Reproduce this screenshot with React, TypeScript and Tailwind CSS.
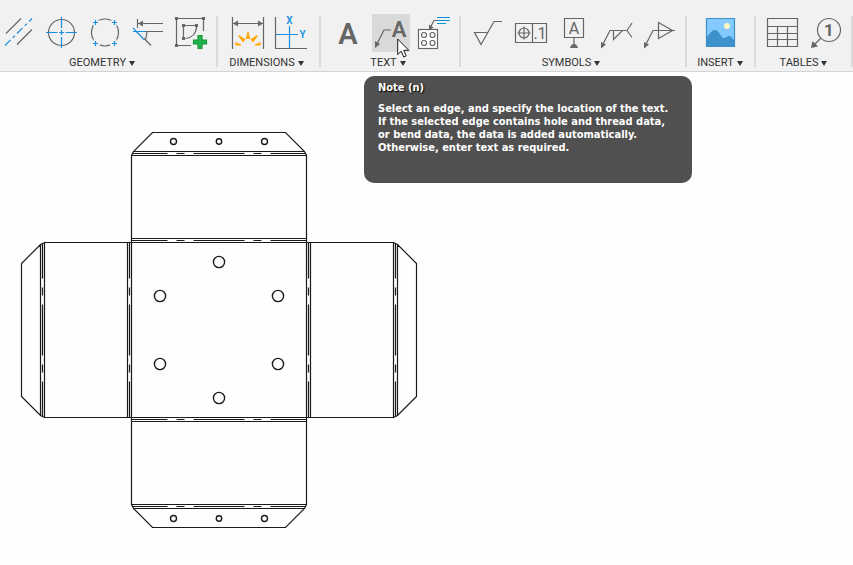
import { ReactNode } from "react";
import clsx from "clsx";

const GRAY = "#666666";
const BLUE = "#1a8fe0";

interface Tool {
  name: string;
  icon: ReactNode;
  tooltip?: { title: string; body: string };
}

interface ToolGroup {
  label: string;
  spacing: string;
  labelSpacing?: string;
  tools: Tool[];
}

const ParallelIcon = () => (
  <>
    <path d="M6 19.5 21 4.5M17 30.5l15-15" />
    <path d="M5 31.5 32 4.5" stroke={BLUE} strokeDasharray="8 3 3 3" />
  </>
);

const CenterMarkIcon = () => (
  <>
    <circle cx="18.5" cy="18.5" r="13" />
    <path d="M3 18.5h11.5M16 18.5h5M22.5 18.5H34M18.5 3v11M18.5 16v5M18.5 23v11" stroke={BLUE} />
  </>
);

const CenterPatternIcon = () => (
  <>
    <circle cx="19" cy="18.5" r="13.5" />
    <path
      d="M5 8.5h9M9.5 4v9M24 8.5h9M28.5 4v9M5 29.5h9M9.5 25v9M24 29.5h9M28.5 25v9"
      stroke="#f1f1f1"
      strokeWidth="4"
    />
    <path
      d="M7 8.5h5M9.5 6v5M26 8.5h5M28.5 6v5M7 29.5h5M9.5 27v5M26 29.5h5M28.5 27v5"
      stroke={BLUE}
    />
  </>
);

const EdgeExtensionIcon = () => (
  <>
    <path d="M8.5 5v9M9 9.5h25M17 17.5h17M15 24.5l7 7M18 18l-1.5 8" />
    <path d="M9 9.5l5-3v6z" fill={GRAY} stroke="none" />
    <path d="M4 17.5h13M4 14l11 11.5" stroke={BLUE} />
  </>
);

const CreateSketchIcon = () => (
  <>
    <path d="M6 4.5h24M4.5 6v24M31.5 6v11M6 31.5h13M13 11.5h10M11.5 13v10M24.5 13c-.5 7-5 11-11 11.5" />
    <path
      d="M3 3h3v3H3zM30 3h3v3h-3zM3 30h3v3H3zM10 10h3v3h-3zM23 10h3v3h-3zM10 23h3v3h-3z"
      fill={GRAY}
      stroke="none"
    />
    <path
      d="M26 21.5h4V26h4.5v4H30v4.5h-4V30h-4.5v-4H26z"
      fill="#22b14c"
      stroke="#159a3c"
    />
  </>
);

const DimensionIcon = () => (
  <>
    <path d="M3.5 3v32M34.5 3v32M4 9.5h30" />
    <path d="M4 9.5l5-3v6zM34 9.5l-5-3v6z" fill={GRAY} stroke="none" />
    <path
      d="M17.5 24.5L19 18l1.500 6.500zM14 27.500l-4.500-6 6 4zM24 27.500l4.500-6-6 4zM12 31l-5-2v2zM26 31l5-2v2z"
      fill="#ffa800"
      stroke="#ffa800"
    />
  </>
);

const OrdinateIcon = () => (
  <>
    <path d="M3.5 3v31.5H35" />
    <path d="M17.5 12v22M4 20.5h22" stroke={BLUE} />
    <text x="17.5" y="10" fontSize="10" fontWeight="600" textAnchor="middle" fill={BLUE} stroke="none">X</text>
    <text x="30.5" y="24" fontSize="10" fontWeight="600" textAnchor="middle" fill={BLUE} stroke="none">Y</text>
  </>
);

const TextIcon = () => (
  <text x="19" y="30" fontSize="29" fontWeight="600" textAnchor="middle" fill={GRAY} stroke="none">A</text>
);

const NoteIcon = () => (
  <>
    <path d="M4 32l8-16h7" />
    <path d="M3 34v-7l5 3z" fill={GRAY} stroke="none" />
    <text x="27" y="23" fontSize="22" fontWeight="600" textAnchor="middle" fill={GRAY} stroke="none">A</text>
  </>
);

const HoleTableNoteIcon = () => (
  <>
    <rect x="3.5" y="15.5" width="19" height="19" fill="#ffffff" />
    <circle cx="9" cy="21" r="2.5" />
    <circle cx="17.5" cy="21" r="2.5" />
    <circle cx="9" cy="29" r="2.5" />
    <circle cx="17.5" cy="29" r="2.5" />
    <path d="M15 14l4-7.5h3" />
    <path d="M14 16.5v-6l4.5 3z" fill={GRAY} stroke="none" />
    <path d="M22 3.5h13M22 6.5h13M22 9.5h9" stroke="#0696d7" />
  </>
);

const SurfaceTextureIcon = () => <path d="M33 7.5h-8l-13 23-6.5-12H19" />;

const ControlFrameIcon = () => (
  <>
    <path d="M3.5 9.5h31v19h-31zM20.5 9.5v19" />
    <circle cx="12" cy="19" r="5" />
    <path d="M12 12.5v13M5.5 19h13" />
    <text x="28" y="25" fontSize="16" textAnchor="middle" fill={GRAY} stroke="none">.1</text>
  </>
);

const DatumIcon = () => (
  <>
    <path d="M9.5 4.5h19v19h-19zM19 24v7" />
    <path d="M15 34q1-4 4-4t4 4z" fill={GRAY} stroke="none" />
    <text x="19" y="20" fontSize="16" textAnchor="middle" fill={GRAY} stroke="none">A</text>
  </>
);

const WeldIcon = () => (
  <>
    <path d="M4 32l8-15.5h17l5-7.5M29 16.5l5 7M15.5 16.5v9l9-9" />
    <path d="M3 34.5V28l5 2.5z" fill={GRAY} stroke="none" />
  </>
);

const TaperIcon = () => (
  <>
    <path d="M4 32l8-15.5h22M17.5 8.5v16l14-8z" />
    <path d="M3 34.5V28l5 2.5z" fill={GRAY} stroke="none" />
  </>
);

const ImageIcon = () => (
  <>
    <path d="M5.5 4.5h28v28h-28z" fill="#84caff" stroke="#3b92c8" />
    <path
      d="M6 23c3-4 5-7 8-7 4 0 6 8 9 8 2 0 3-2 5-2s3 2 5 4v6.500H6z"
      fill="#3d92cb"
      stroke="none"
    />
    <circle cx="26" cy="12" r="3" fill="#fff6c4" stroke="none" />
  </>
);

const TableIcon = () => (
  <path d="M4.5 4.5h30v28h-30zM4.5 12.5h30M4.5 19.5h30M4.5 25.5h30M14.5 12.5v20M24.5 12.5v20" />
);

const BalloonIcon = () => (
  <>
    <circle cx="23" cy="16" r="11.5" />
    <path d="M14.5 24.5L7 32" />
    <path d="M5 34l1.5-7 5.5 5.5z" fill={GRAY} stroke="none" />
    <text x="23" y="22" fontSize="17" fontWeight="700" textAnchor="middle" fill={GRAY} stroke="none">1</text>
  </>
);

const groups: ToolGroup[] = [
  {
    label: "GEOMETRY",
    spacing: "pr-1.5",
    labelSpacing: "pr-1.5",
    tools: [
      { name: "Centerline", icon: <ParallelIcon /> },
      { name: "Center Mark", icon: <CenterMarkIcon /> },
      { name: "Center Mark Pattern", icon: <CenterPatternIcon /> },
      { name: "Edge Extension", icon: <EdgeExtensionIcon /> },
      { name: "Create Sketch", icon: <CreateSketchIcon /> },
    ],
  },
  {
    label: "DIMENSIONS",
    spacing: "pl-[11px] pr-[9px]",
    labelSpacing: "pr-1.5",
    tools: [
      { name: "Dimension", icon: <DimensionIcon /> },
      { name: "Ordinate Dimension", icon: <OrdinateIcon /> },
    ],
  },
  {
    label: "TEXT",
    spacing: "pl-2 pr-1.5",
    labelSpacing: "pr-1.5",
    tools: [
      { name: "Text", icon: <TextIcon /> },
      {
        name: "Note",
        icon: <NoteIcon />,
        tooltip: {
          title: "Note (n)",
          body:
            "Select an edge, and specify the location of the text.\n" +
            "If the selected edge contains hole and thread data,\n" +
            "or bend data, the data is added automatically.\n" +
            "Otherwise, enter text as required.",
        },
      },
      { name: "Hole and Thread Note", icon: <HoleTableNoteIcon /> },
    ],
  },
  {
    label: "SYMBOLS",
    spacing: "pl-2 pr-1.5",
    labelSpacing: "pr-1.5",
    tools: [
      { name: "Surface Texture", icon: <SurfaceTextureIcon /> },
      { name: "Feature Control Frame", icon: <ControlFrameIcon /> },
      { name: "Datum Identifier", icon: <DatumIcon /> },
      { name: "Welding", icon: <WeldIcon /> },
      { name: "Taper and Slope", icon: <TaperIcon /> },
    ],
  },
  {
    label: "INSERT",
    spacing: "w-[67px] pr-px",
    tools: [{ name: "Insert Image", icon: <ImageIcon /> }],
  },
  {
    label: "TABLES",
    spacing: "pl-[7px] pr-[7px]",
    tools: [
      { name: "Table", icon: <TableIcon /> },
      { name: "Balloon", icon: <BalloonIcon /> },
    ],
  },
];

function ToolButton({ tool }: { tool: Tool }) {
  return (
    <div className="relative">
      <button
        aria-label={tool.name}
        className={clsx("block size-[38px] hover:bg-[#d9d9d9]", tool.tooltip && "bg-[#d9d9d9]")}
      >
        <svg viewBox="0 0 38 38" className="size-full overflow-visible" fill="none" stroke={GRAY} strokeWidth="1.2">
          {tool.icon}
        </svg>
      </button>

      {tool.tooltip && (
        <>
          {/* Mouse pointer */}
          <svg viewBox="0 0 13 20" className="absolute left-[25px] top-6 z-20 h-5 w-[13px]">
            <path
              d="M.7 1v15.500l3.500-3.300 2.500 5.800 2.500-1.100-2.500-5.600h5z"
              fill="#ffffff"
              stroke="#1a1a1a"
            />
          </svg>
          <div
            role="tooltip"
            className="absolute -left-2 top-[62px] z-10 h-[107px] w-[328px] rounded-[10px] bg-[#505050] px-3.5 py-[5px] font-['DejaVu_Sans_Condensed','DejaVu_Sans',sans-serif] text-[11px] leading-[13px] font-bold text-white"
          >
            <p className="mb-2 [text-shadow:1px_1px_1px_#000]">{tool.tooltip.title}</p>
            <p className="whitespace-pre">{tool.tooltip.body}</p>
          </div>
        </>
      )}
    </div>
  );
}

function Toolbar() {
  return (
    <header className="flex border-b border-[#d4d4d4] bg-[#f1f1f1] pt-3.5 pb-px">
      {groups.map((group) => (
        <section key={group.label} className="flex shrink-0">
          <div className={clsx("flex flex-col items-center gap-1", group.spacing)}>
            <div className="flex gap-[5px]">
              {group.tools.map((tool) => (
                <ToolButton key={tool.name} tool={tool} />
              ))}
            </div>
            <button
              className={clsx(
                "flex items-center gap-[3px] text-[11px] leading-[14px] text-[#333333]",
                group.labelSpacing
              )}
            >
              {group.label}
              <svg viewBox="0 0 6 5" className="h-[5px] w-1.5" fill="#333333">
                <path d="M0 0h6L3 5z" />
              </svg>
            </button>
          </div>
          <div className="mt-0.5 mb-[3px] w-0.5 bg-[#d9d9d9]" />
        </section>
      ))}
    </header>
  );
}

// One side of the unfolded box: flap, bend lines and wall
function Side({ angle }: { angle: number }) {
  return (
    <g transform={`rotate(${angle} 197.5 197.5)`}>
      <path d="M110 110V23l2-4 19-19H264l19 19 2 4V110M112 19H283M110 23H285M110 106H285M110 110H285" />
      <path d="M111 21h35M155 21h8M172 21h51M232 21h8M249 21h35" />
      <path d="M110 108h36M155 108h8M172 108h51M232 108h8M249 108h36" />
    </g>
  );
}

const boltHoles = [
  [198, 130],
  [139, 164],
  [257, 164],
  [139, 232],
  [257, 232],
  [198, 266],
];

function FlatPattern() {
  return (
    <svg
      viewBox="0 0 396 396"
      className="size-[396px] overflow-visible"
      fill="none"
      stroke="#1a1a1a"
      strokeWidth="1.2"
      role="img"
      aria-label="Sheet metal flat pattern"
    >
      <g transform="translate(.5 .5)">
        {[0, 90, 180, 270].map((angle) => (
          <Side key={angle} angle={angle} />
        ))}
      </g>
      {boltHoles.map(([x, y]) => (
        <circle key={`${x}-${y}`} cx={x} cy={y} r="5.6" strokeWidth="1.4" />
      ))}
      {[9.5, 386.5].map((y) => (
        <g key={y} strokeWidth="1.4">
          <circle cx="152.5" cy={y} r="3" />
          <circle cx="198" cy={y} r="2.7" />
          <circle cx="243.5" cy={y} r="3" />
        </g>
      ))}
    </svg>
  );
}

export default function App() {
  return (
    <div className="min-h-screen overflow-x-hidden bg-[#fefefe] font-[Roboto,sans-serif]">
      <Toolbar />
      <main className="pt-15 pl-[21px]">
        <FlatPattern />
      </main>
    </div>
  );
}
